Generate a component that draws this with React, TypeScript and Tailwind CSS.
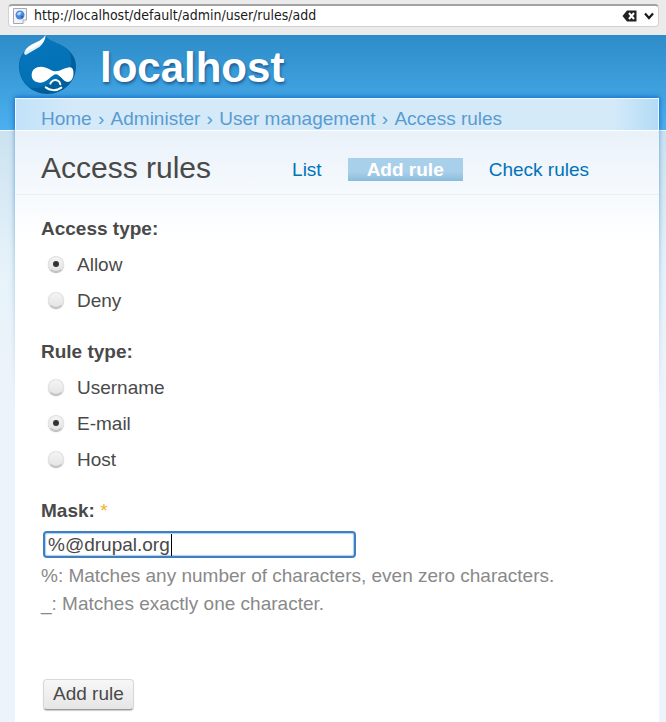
import { useState } from "react";

const crumbs = ["Home", "Administer", "User management", "Access rules"];

const DrupalLogo = () => {
    return <svg viewBox="0 0 171 177" className="h-[59px] w-[57px]" aria-hidden="true">
        <defs>
            <linearGradient id="drop" x1="0" y1="0" x2="0.4" y2="1">
                <stop offset="0" stopColor="#0a76bd" />
                <stop offset="1" stopColor="#0070b4" />
            </linearGradient>
        </defs>
        <path d="M80 0 C82 12 96 18 112 24 C148 38 171 62 171 94 C171 142 132 177 86 177 C38 177 0 142 0 94 C0 58 20 42 48 26 C66 16 78 10 80 0Z" fill="#005f9a" />
        <path d="M80 0 C82 10 96 17 112 24 C128 30 142 38 150 48 C166 84 154 112 126 126 C96 144 62 168 30 156 C10 140 1 116 1 94 C1 58 20 42 48 26 C66 16 78 10 80 0Z" fill="url(#drop)" />
        <path d="M80 -2 C80 12 74 24 62 35 C48 44 34 50 24 58 C16 62 14 54 18 47 C26 34 40 28 52 22 C66 15 76 9 80 -2Z" fill="#fff" />
        <path d="M62 35 C48 44 34 50 24 58 C16 62 14 54 18 47 C34 48 54 34 66 24Z" fill="#bfe0f5" opacity="0.5" />
        <path d="M66 95 C84 95 98 109 110 109 C124 109 138 97 153 97 C162 98 165 108 163 121 C161 134 154 141 146 141 C132 141 124 118 110 118 C98 119 86 143 64 143 C48 143 38 134 38 120 C38 104 50 95 66 95Z" fill="#fff" />
        <path d="M94 146 C98 136 108 133 116 137 C121 139 123 143 124 148" fill="none" stroke="#fff" strokeWidth="6" strokeLinecap="round" />
        <path d="M80 157 C92 168 114 168 127 158" fill="none" stroke="#fff" strokeWidth="6" strokeLinecap="round" />
    </svg>
}

const AddressBar = () => {
    return <div className="flex h-[35px] items-start bg-[#ebebeb] pt-1 pr-[7px] pl-2">
        <div className="flex h-[23px] w-full items-center rounded border border-t-2 border-[#d2d2d2] border-t-[#a3a3a3] bg-white pr-1 pl-1">
            <svg viewBox="0 0 14 16" className="h-4 w-3.5 shrink-0" aria-hidden="true">
                <path d="M0.5 0.5H13.5V11.5L10 15.5H0.5Z" fill="#f2f4f8" stroke="#a3a8b4" />
                <circle cx="7" cy="7" r="4.5" fill="#4a86d8" />
                <path d="M4 6C5 3.5 8 3 8.500 5L7 7L5 7.500Z" fill="#b8d6fa" />
                <path d="M8 8.500L10.500 7.500L9 10.500Z" fill="#254f9c" />
                <path d="M10 15.500V12H13.500" fill="#fff" stroke="#a3a8b4" />
            </svg>
            <input aria-label="Address" type="text" defaultValue="http://localhost/default/admin/user/rules/add" className="-mt-0.5 ml-[7px] h-5 min-w-0 flex-1 bg-transparent font-['DejaVu_Sans_Condensed','DejaVu_Sans',sans-serif] text-[14px] text-[#1a1a1a] outline-none" />
            <button type="button" aria-label="Clear address" className="shrink-0">
                <svg viewBox="0 0 15 12" className="h-3 w-[15px]">
                    <path d="M5 0.5H14.5V11.5H5L0.5 6Z" fill="#222" />
                    <path d="M7 3L12 9M12 3L7 9" stroke="#fff" strokeWidth="2" />
                </svg>
            </button>
            <button type="button" aria-label="Show history" className="ml-[7px] shrink-0">
                <svg viewBox="0 0 10 8" className="h-2 w-2.5">
                    <path d="M1 1.500L5 6L9 1.500" fill="none" stroke="#1a1a1a" strokeWidth="2.200" />
                </svg>
            </button>
        </div>
    </div>
}

const Radio = ({ name, label, checked, onChange }: { name: string; label: string; checked: boolean; onChange: () => void }) => {
    return <label className="flex items-center">
        <input type="radio" name={name} checked={checked} onChange={onChange} className="mr-[13px] mb-0.5 ml-[7px] grid size-4 appearance-none place-items-center rounded-full border border-[#e0e0e0] border-b-[#b8b8b8] bg-linear-to-b from-[#f4f4f4] to-[#e4e4e4] shadow-[0_1px_1px_rgba(0,0,0,0.3)] checked:before:size-1.5 checked:before:rounded-full checked:before:bg-[#333]" />
        {label}
    </label>
}

const RadioGroup = ({ title, options, initial }: { title: string; options: string[]; initial: string }) => {
    const [value, setValue] = useState(initial);

    return <fieldset className="flex flex-col gap-2">
        <legend className="mb-2 font-bold">{title}</legend>
        {options.map((option) => (
            <Radio key={option} name={title} label={option} checked={value === option} onChange={() => setValue(option)} />
        ))}
    </fieldset>
}

const App = () => {
    return <div className="flex min-h-screen flex-col font-['Liberation_Sans',Arial,sans-serif] text-[19px] leading-7 text-[#494949]">
        <AddressBar />
        <div className="flex flex-1 flex-col bg-[linear-gradient(#2d8cc8,#4cb0f0_95px,#fff_95px,#fff_96px,#cbe2f0_96px,#e6f2f9_230px,#edf3fb_340px)]">
            <header className="flex h-[63px] items-start pl-[19px]">
                <DrupalLogo />
                <a href="#home" className="ml-6 pt-1 text-[42px] leading-[58px] font-bold text-white [text-shadow:1px_2px_3px_#1c5a94]">localhost</a>
            </header>
            <div className="relative mr-[7px] ml-[15px] flex flex-1 flex-col">
                {/* side glow, fades out down the page */}
                <div className="pointer-events-none absolute -inset-x-2 -top-2 h-80 px-2 pt-2 [mask-image:linear-gradient(black_30%,transparent)]">
                    <div className="h-full shadow-[0_0_5px_rgba(0,100,180,0.55)]"></div>
                </div>
                <nav aria-label="Breadcrumb" className="relative h-8 border border-b-0 border-[#f0f8fe] bg-[linear-gradient(90deg,#c2e2f9,#d5eaf9_60px,#d5eaf9_calc(100%-45px),#b3dbf6)] pt-1.5 pl-[25px] text-[#5a9bd0] shadow-[0_-1px_5px_rgba(0,80,210,0.5)]">
                    {crumbs.map((crumb, i) => (
                        <span key={crumb}>
                            {i > 0 && <span className="px-px"> › </span>}
                            <a href="#crumb">{crumb}</a>
                        </span>
                    ))}
                </nav>
                <main className="relative flex-1 border-t border-white bg-[linear-gradient(#e9f1f9,#f6fafd_64px,#fff_110px)]">
                    <div className="flex h-16 items-center border-b border-[#e9eff3] pt-2.5 pl-[26px]">
                        <h1 className="text-[30px] leading-9">Access rules</h1>
                        <nav aria-label="Tabs" className="ml-[81px] flex items-center gap-[26px] pt-1 leading-[23px] text-[#0073ba]">
                            <a href="#list">List</a>
                            <a href="#add" aria-current="page" className="bg-linear-to-b from-[#a9d0ea] from-60% to-[#8abbdd] px-[19px] font-bold text-white">Add rule</a>
                            <a href="#check">Check rules</a>
                        </nav>
                    </div>
                    <form onSubmit={(e) => e.preventDefault()} className="flex flex-col gap-[23px] pt-5 pr-6 pb-3 pl-[26px]">
                        <RadioGroup title="Access type:" options={["Allow", "Deny"]} initial="Allow" />
                        <RadioGroup title="Rule type:" options={["Username", "E-mail", "Host"]} initial="E-mail" />
                        <div>
                            <label htmlFor="mask" className="font-bold">Mask: <span className="font-normal text-[#f0b429]">*</span></label>
                            <div className="relative mt-1.5 ml-0.5 w-[313px]">
                                <input id="mask" type="text" defaultValue="%@drupal.org" aria-describedby="mask-help" className="block h-[27px] w-full rounded border-2 border-[#3f7fbf] bg-white px-[3px] shadow-[inset_0_0_1px_1px_#a9d0f5] outline-none" />
                                <span className="absolute top-[3px] left-32 h-[22px] w-px bg-black"></span>
                            </div>
                            <p id="mask-help" className="mt-1 text-[#898989]">
                                %: Matches any number of characters, even zero characters.<br />
                                _: Matches exactly one character.
                            </p>
                        </div>
                        <button type="submit" className="mt-[38px] ml-0.5 h-[31px] self-start rounded border border-[#d8d8d8] border-b-[#999] bg-linear-to-b from-[#f7f7f7] to-[#e6e6e6] px-[9px] pb-0.5 leading-[26px] shadow-[0_1px_1px_rgba(0,0,0,0.2)]">Add rule</button>
                    </form>
                </main>
            </div>
        </div>
    </div>
}

export default App;
